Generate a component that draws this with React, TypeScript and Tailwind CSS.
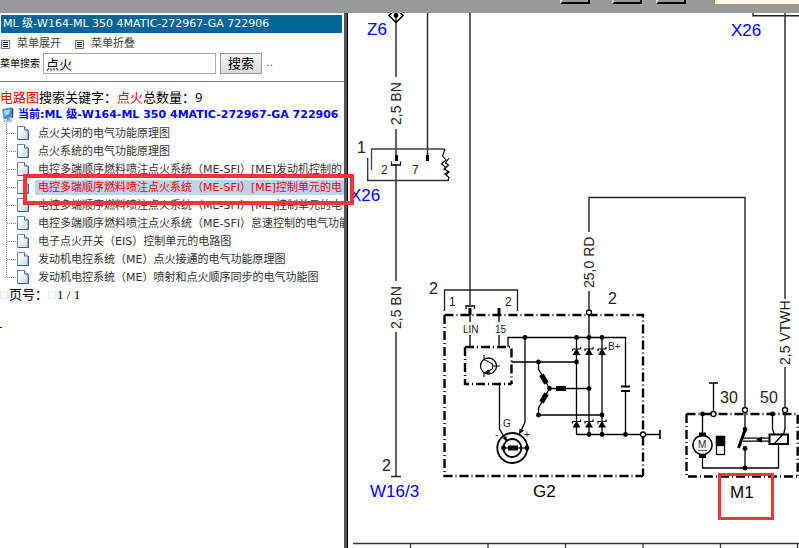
import clsx from 'clsx'

const vehicle = 'ML 级-W164-ML 350 4MATIC-272967-GA 722906'

const results = [
  '点火关闭的电气功能原理图',
  '点火系统的电气功能原理图',
  '电控多端顺序燃料喷注点火系统（ME-SFI）[ME]发动机控制的',
  '电控多端顺序燃料喷注点火系统（ME-SFI）[ME]控制单元的电',
  '电控多端顺序燃料喷注点火系统（ME-SFI）[ME]控制单元的电',
  '电控多端顺序燃料喷注点火系统（ME-SFI）怠速控制的电气功能',
  '电子点火开关（EIS）控制单元的电路图',
  '发动机电控系统（ME）点火接通的电气功能原理图',
  '发动机电控系统（ME）喷射和点火顺序同步的电气功能图',
]

const SELECTED = 3

function MenuIcon() {
  return (
    <svg width="9" height="9" viewBox="0 0 9 9" shapeRendering="crispEdges" className="shrink-0">
      <rect x="0.5" y="0.5" width="8" height="8" fill="#fff" stroke="#777" />
      <path d="M2 2.5h5M2 4.5h5M2 6.5h5" stroke="#000" />
    </svg>
  )
}

function ComputerIcon() {
  return (
    <svg width="12" height="16" viewBox="0 0 12 16" className="shrink-0">
      <path d="M.5 2.500L9 .8l1 9.700L2 12z" fill="#3d8fd6" stroke="#7b9bb8" />
      <path d="M2 3.500l6-1-.8 4.500L2.700 9z" fill="#a8dcfa" />
      <path d="M9.500 .5l1.800 1v9l-1.300 .5z" fill="#35536f" />
      <path d="M5 12l3-.5.5 2-3 .5z" fill="#8296aa" />
      <path d="M1.500 14l7-1.500 2 1.500-7 1.500z" fill="#c6d2df" stroke="#8a9cb0" strokeWidth=".6" />
    </svg>
  )
}

function PageIcon() {
  return (
    <svg width="12" height="14" viewBox="0 0 12 14" className="shrink-0">
      <defs>
        <linearGradient id="paper" x1="0" y1="0" x2="1" y2="1">
          <stop offset="0.3" stopColor="#fff" />
          <stop offset="1" stopColor="#b9d8fb" />
        </linearGradient>
      </defs>
      <path d="M.5 .5h7l3.500 3.500v9.500H.5z" fill="url(#paper)" stroke="#6f87b5" />
      <path d="M7.500 .5v3.500H11" fill="#dbe8f8" stroke="#4d689c" />
      <path d="M1 13.500h10.500V4" fill="none" stroke="#3f5c93" />
    </svg>
  )
}

function TreeRow({ label, selected, last }: { label: string; selected: boolean; last: boolean }) {
  return (
    <li className="flex h-[18px] items-center overflow-hidden">
      <svg width="17" height="18" viewBox="0 0 17 18" shapeRendering="crispEdges" className="shrink-0">
        <path d={last ? 'M6.500 0v10M7 9.500h10' : 'M6.500 0v18M7 9.500h10'} fill="none" stroke="#808080" strokeDasharray="1 1" />
      </svg>
      <PageIcon />
      <a
        href="#diagram"
        className={clsx(
          'ml-1.5 min-w-0 flex-1 overflow-hidden whitespace-nowrap pl-[3px] text-[11px] leading-[15px]',
          selected ? 'bg-[#c0d2ec] text-[#f00]' : 'text-[#333]'
        )}
      >
        {label}
      </a>
    </li>
  )
}

function Sidebar() {
  return (
    <aside className="w-[344px] shrink-0 overflow-hidden bg-white pt-0.5 font-['DejaVu_Sans','Noto_Sans_CJK_SC',sans-serif]">
      <h1 className="ml-px mr-0.5 h-[18px] whitespace-nowrap bg-[#069] pl-0.5 text-[11px] leading-[18px] text-white">
        {vehicle}
      </h1>

      <div className="flex h-5 items-center gap-[7px] pl-px pt-0.5 text-[11px] text-[#444]">
        <MenuIcon />
        <button type="button" className="mr-[7px]">菜单展开</button>
        <MenuIcon />
        <button type="button">菜单折叠</button>
      </div>

      <form className="flex h-[21px] items-center" onSubmit={(e) => e.preventDefault()}>
        <label htmlFor="keyword" className="w-[43px] shrink-0 whitespace-nowrap text-[10px] text-black">
          菜单搜索
        </label>
        <input
          id="keyword"
          defaultValue="点火"
          className="h-[21px] w-[173px] border border-[#a9a9a9] px-0.5 text-[13px] leading-[17px] text-black"
        />
        <button
          type="submit"
          className="ml-1 h-[21px] w-[42px] border border-[#999] bg-linear-to-b from-[#f6f6f6] to-[#dcdcdc] text-[13px] leading-[19px] text-black"
        >
          搜索
        </button>
        <span className="ml-1 text-[11px] text-[#345]">..</span>
      </form>

      <hr className="mt-[7px] border-[#808080]" />

      <p className="mt-1.5 h-[18px] whitespace-nowrap font-['Open_Sans','Noto_Sans_CJK_SC',sans-serif] text-[13px] leading-[18px] text-black">
        <span className="text-[#f00]">电路图</span>搜索关键字：<span className="text-[#f00]">点火</span>总数量：9
      </p>

      <div className="flex h-[18px] items-center gap-1 whitespace-nowrap pl-0.5 text-[11px] font-bold leading-[18px] text-[#00f]">
        <ComputerIcon />
        <a href="#vehicle" className="min-w-0 flex-1 overflow-hidden">当前:{vehicle}</a>
      </div>
      <ul>
        {results.map((label, i) => (
          <TreeRow key={i} label={label} selected={i === SELECTED} last={i === results.length - 1} />
        ))}
      </ul>

      <p className="flex h-[18px] items-center whitespace-nowrap font-['Liberation_Serif','Noto_Sans_CJK_SC',serif] text-[13px] text-black">
        <span className="mr-px size-2 border border-[#fbe3e3]" />
        页号：
        <span className="mr-px size-2 border border-[#dceeee]" />
        1 / 1
      </p>
      <a href="#more" aria-label="更多" className="mt-[23px] block w-0.5 border-b border-[#00f]" />
    </aside>
  )
}

function Dot({ x, y }: { x: number; y: number }) {
  return <circle cx={x} cy={y} r="2.400" fill="#000" stroke="none" />
}

function Terminal({ x, y }: { x: number; y: number }) {
  return <circle cx={x} cy={y} r="2.500" fill="#fff" stroke="#000" strokeWidth="1.300" />
}

function Zener({ x, y }: { x: number; y: number }) {
  return (
    <g>
      <path d={`M${x} ${y}l4 6.500h-8z`} fill="#000" stroke="none" />
      <path d={`M${x - 4} ${y + 2.5}v-2h8v-2`} fill="none" stroke="#000" strokeWidth="1.200" />
    </g>
  )
}

function WiringDiagram() {
  return (
    <svg
      width="451"
      height="535"
      viewBox="348 13 451 535"
      className="block shrink-0 font-['Liberation_Sans',Arial,sans-serif]"
      fill="none"
      stroke="#000"
      strokeWidth="1.300"
    >
      {/* supply lines */}
      <g stroke="#222" strokeWidth="1.400">
        <path d="M396 13v64M396 129v26M396 165v116M396 332v144M391 476.500h10" />
        <path d="M427.500 13v142M470 13v292" />
        <path d="M785 13v286M785 367v41M753 13v2.700h46" />
        <path d="M589 232v-34.500h156V408M589 291v19" />
      </g>
      <path d="M389 15.500l7-7 7 7-7 7z" strokeWidth="1.500" />
      <Dot x={396} y={15.5} />

      {/* X26 connector */}
      <path d="M396.500 155v6M427.500 155v6" strokeWidth="3" />
      <path d="M391.500 161.500v3.500h9v-3.500" />
      <path d="M371.500 170v-21H445" stroke="#444" />
      <path d="M367.700 158v22.500H449" stroke="#333" />
      <path d="M445 149l-2.500 7 3.500 4-4.500 4 4 3-1.500 2 5 3-3 3 3 2.500-1 3M449 158l-3.500 5 3 2-4 4 4 2.500-4 3" strokeWidth="1.100" />

      {/* G2 connector */}
      <path d="M444.500 311v-21h73v21" stroke="#222" />
      <path d="M466 309v-3h8.500v3" />
      <path d="M470 308v7M499 308v7" strokeWidth="3" />
      <path d="M470 315v7M499 315v7M470 335v12M499 335v12" />

      {/* G2 alternator */}
      <g strokeWidth="2.400" strokeDasharray="9 3 1 3">
        <path d="M444.500 315H643v161" />
        <path d="M444.500 315v161H643" />
        <path d="M465 347h46.500v37M465 347v37h46.500" />
      </g>
      <circle cx="488.500" cy="366" r="8" />
      <path d="M484 355v4.500l8.500 4.500v5l-8.500 4v4M493 366h7" strokeWidth="1.100" />
      <path d="M485 373.500l3-4 2.500 3z" fill="#000" stroke="none" />
      <path d="M508 347v-9.500h117.500v48.500M625.500 391v43.500M525 337.500V422l-5 11M499.500 384v45l7 12" />
      <path d="M511.500 362h65M538.500 362v7l11 19.500L538.500 408v7M549.500 388.500H589M538.500 415H602" />
      <path d="M576.500 337.500v97M589 315v119.500M602 337.500v97M576.500 434.500H660" />
      <path d="M621 386.500h9M621 391h9" strokeWidth="2" />
      <path d="M660 430v9" strokeWidth="1.600" />
      <g fill="#000" stroke="none">
        <rect x="556" y="386" width="10" height="5" />
        <rect x="541.500" y="374" width="5" height="10" transform="rotate(-30 544 379)" />
        <rect x="541.500" y="393" width="5" height="10" transform="rotate(30 544 398)" />
        <path d="M519 434.500l.5-6 4.500 2z" />
        <path d="M507 441.500l-4.500-3.500 4-2z" />
      </g>
      <Dot x={525} y={337.5} />
      <Dot x={538.5} y={362} />
      <Dot x={576.5} y={362} />
      <Dot x={549.5} y={388.5} />
      <Dot x={589} y={388.5} />
      <Dot x={538.5} y={415} />
      <Dot x={602} y={415} />
      <Dot x={625.5} y={434.5} />
      <Dot x={589} y={434.5} />
      <Dot x={602} y={434.5} />
      {[576.5, 589, 602].map((x) => (
        <g key={x}>
          <Dot x={x} y={337.5} />
          <Zener x={x} y={348.5} />
          <Zener x={x} y={421} />
        </g>
      ))}
      <Terminal x={589} y={312.5} />
      <Terminal x={643} y={434.5} />
      <circle cx="512.300" cy="448" r="15" strokeWidth="1.800" />
      <circle cx="512.300" cy="448" r="9" strokeWidth="1.800" />
      <path d="M503.500 448H527" />
      <rect x="508" y="445.500" width="10" height="5" fill="#000" stroke="none" />
      <Dot x={503.5} y={448} />
      <Dot x={527} y={448} />

      {/* M1 starter */}
      <g strokeWidth="2.400" strokeDasharray="9 3 1 3">
        <path d="M686.500 414H797.700v62.500" />
        <path d="M686.500 414v62.500h111.200" />
      </g>
      <path d="M709 383h9M713.500 383v29M702.500 414v20M702.500 457v11h76V444" />
      <circle cx="702.500" cy="445" r="9.600" fill="#fff" strokeWidth="1.600" />
      <path d="M699 434.500h7M699 456h7" strokeWidth="4" />
      <path d="M698 450.500h9" stroke="#666" strokeWidth="1" />
      <rect x="716.500" y="436.500" width="8" height="18" />
      <rect x="716.500" y="436.500" width="8" height="9" fill="#000" />
      <path d="M745 412v17M745 448v20M743 438.200h26M743 441.200h26" />
      <path d="M745 430l-6.500 18" strokeWidth="3" />
      <path d="M756 439.700l6-3v6z" fill="#000" stroke="none" />
      <rect x="769.500" y="434.500" width="18.500" height="9.500" fill="#fff" strokeWidth="2" />
      <path d="M774 444l10-11 1-5v-16M772.500 414v15l2 6" />
      <Dot x={702.5} y={414} />
      <Dot x={772.5} y={414} />
      <Dot x={745} y={429.5} />
      <Dot x={745} y={448.5} />
      <Dot x={745} y={468} />
      <Terminal x={713.5} y={414} />
      <Terminal x={745} y={410} />
      <Terminal x={785} y={410} />

      {/* grid ruler */}
      <path d="M353 543.500h446M410.500 543.500v5M488 543.500v5M565.500 543.500v5M643 543.500v5M720.500 543.500v5M797.500 543.500v5" stroke="#333" />

      <g stroke="none" fill="#00f" fontSize="17">
        <text x="367" y="35">Z6</text>
        <text x="731" y="36">X26</text>
        <text x="350" y="201">X26</text>
        <text x="370" y="497">W16/3</text>
      </g>
      <g stroke="none" fill="#000" fontSize="17">
        <text x="533" y="497">G2</text>
        <text x="730" y="498">M1</text>
      </g>
      <g stroke="none" fill="#222" fontSize="16">
        <text x="357" y="153">1</text>
        <text x="429" y="294">2</text>
        <text x="382" y="471">2</text>
        <text x="608" y="304">2</text>
        <text x="720" y="403">30</text>
        <text x="760" y="403">50</text>
      </g>
      <g stroke="none" fill="#222" fontSize="14">
        <text transform="translate(401 125) rotate(-90)">2,5 BN</text>
        <text transform="translate(401 329) rotate(-90)">2,5 BN</text>
        <text transform="translate(594 288) rotate(-90)">25,0 RD</text>
        <text transform="translate(790 365) rotate(-90)">2,5 VTWH</text>
      </g>
      <g stroke="none" fill="#222" fontSize="12">
        <text x="381" y="174">2</text>
        <text x="412" y="174">7</text>
        <text x="449" y="306">1</text>
        <text x="505" y="306">2</text>
      </g>
      <g stroke="none" fill="#222" fontSize="10">
        <text x="463" y="333">LIN</text>
        <text x="495" y="333">15</text>
        <text x="608" y="350">B+</text>
        <text x="503" y="427">G</text>
        <text x="495" y="438">-</text>
        <text x="524" y="438">+</text>
        <text x="698" y="448">M</text>
      </g>
    </svg>
  )
}

function Toolbar() {
  return (
    <header className="flex h-[13px] shrink-0 items-start justify-end bg-[#999]">
      <button type="button" aria-label="上一页" className="mr-[22px] h-1 w-[30px] border-b-2 border-l-2 border-r-2 border-black border-l-[#ddd]" />
      <button type="button" aria-label="下一页" className="mr-3.5 h-1 w-[30px] border-b-2 border-l-2 border-r-2 border-black border-l-[#ddd]" />
      <button type="button" aria-label="打印" className="mr-[29px] h-1 w-[30px] border-b-2 border-l-2 border-r-2 border-black border-l-[#ddd]" />
      <div className="h-1 w-[84px] bg-[#ffffe1]" />
    </header>
  )
}

export default function App() {
  return (
    <div className="relative flex min-h-screen flex-col overflow-hidden bg-white">
      <Toolbar />
      <div className="flex min-h-0 flex-1">
        <Sidebar />
        <div className="w-1 shrink-0 border-r border-black bg-[#555]" />
        <main className="min-w-0 flex-1 overflow-hidden">
          <WiringDiagram />
        </main>
      </div>

      {/* highlight frames */}
      <div className="pointer-events-none absolute left-[23px] top-[174px] h-[31px] w-[331px] border-4 border-[#fa3636]" />
      <div className="pointer-events-none absolute left-[718px] top-[473px] h-[47px] w-14 border-[3px] border-[#fa3636]" />
    </div>
  )
}
